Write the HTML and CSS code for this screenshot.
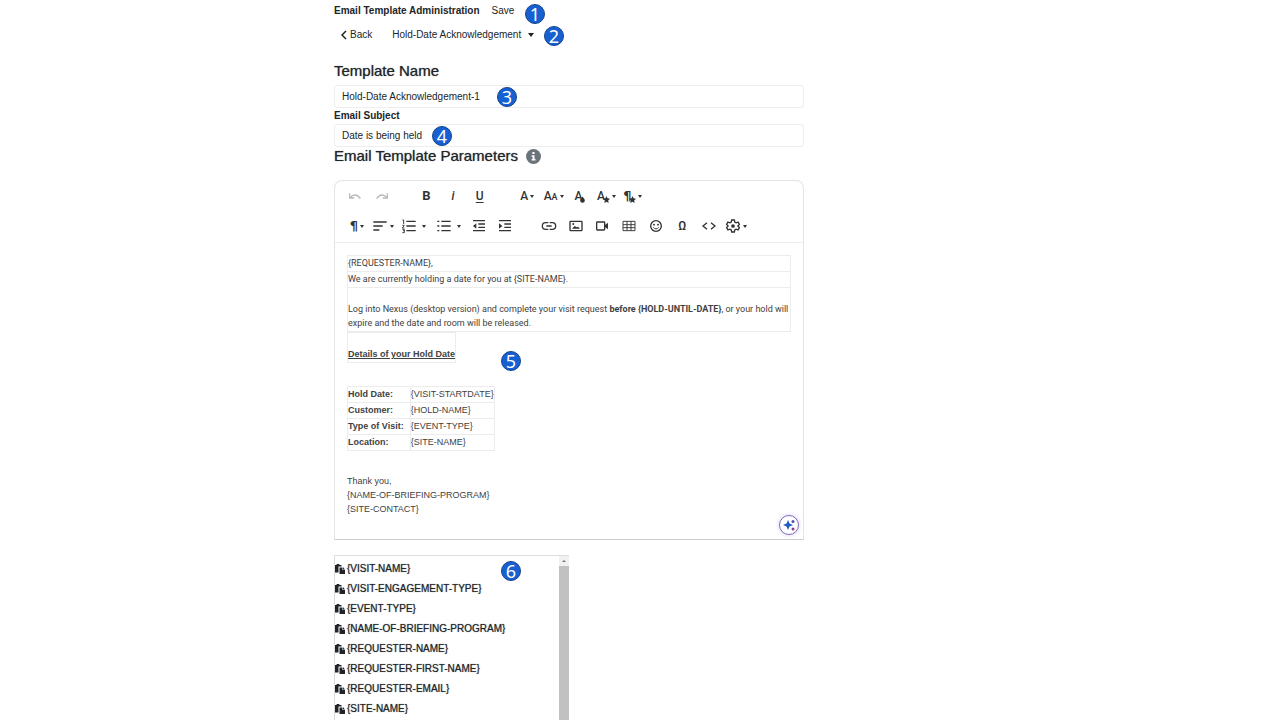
FILE: index.html
```
<!DOCTYPE html>
<html lang="en">
<head>
    <meta charset="utf-8">
    <title>Email Template Administration</title>
    <meta name="viewport" content="width=device-width, initial-scale=1">
    <link rel="stylesheet" href="styles.css">
</head>
<body>
    <main>
        <header class="titlebar">
            <h1>Email Template Administration</h1>
            <button class="plain">Save</button>
        </header>
        <nav class="subbar">
            <a href="#" class="back"><svg width="6" height="10" viewBox="0 0 6 10"><path d="M5 1L1 5l4 4" fill="none" stroke="#222" stroke-width="1.5"/></svg>Back</a>
            <span class="picker">
                <select aria-label="Template"><option>Hold-Date Acknowledgement</option></select>
                <svg width="6" height="4" viewBox="0 0 6 4"><path d="M0 0h6L3 4z" fill="#222"/></svg>
            </span>
        </nav>

        <h2><label for="name">Template Name</label></h2>
        <input class="field" id="name" type="text" value="Hold-Date Acknowledgement-1">
        <label class="small" for="subject">Email Subject</label>
        <input class="field" id="subject" type="text" value="Date is being held">
        <h2 class="params">Email Template Parameters
            <svg width="15" height="15" viewBox="0 0 16 16"><circle cx="8" cy="8" r="8" fill="#6b737b"/><path d="M6.8 3.2h2.3v2.2H6.8zM6 6.6h3.1v4h1v1.7H6v-1.7h1V8.3H6z" fill="#fff"/></svg>
        </h2>

        <section class="editor">
            <div class="toolbar">
                <div class="row">
                    <div class="group history">
                        <button aria-label="Undo"><svg class="off" viewBox="0 0 24 24"><path d="M4 8v7h7M5 14c4-5 11-5 15 2" class="line"/></svg></button>
                        <button aria-label="Redo"><svg class="off" viewBox="0 0 24 24"><path d="M20 8v7h-7M19 14c-4-5-11-5-15 2" class="line"/></svg></button>
                    </div>
                    <div class="group format">
                        <button class="bold">B</button>
                        <button class="italic">i</button>
                        <button class="under">U</button>
                    </div>
                    <div class="group text">
                        <button class="drop">A</button>
                        <button class="drop"><span>A<small>A</small></span></button>
                        <button aria-label="Text color" class="mark">A<svg viewBox="0 0 24 24"><path d="M12 2c4 6 8 9 8 13a8 8 0 0 1-16 0c0-4 4-7 8-13z"/></svg></button>
                        <button aria-label="Inline style" class="drop mark">A<svg viewBox="0 0 24 24"><path d="M12 0l3.5 8 8.5 1-6.3 6L19.5 24 12 19.5 4.5 24l1.8-9L0 9l8.5-1z"/></svg></button>
                        <button aria-label="Paragraph style" class="drop mark pilcrow">¶<svg viewBox="0 0 24 24"><path d="M12 0l3.5 8 8.5 1-6.3 6L19.5 24 12 19.5 4.5 24l1.8-9L0 9l8.5-1z"/></svg></button>
                    </div>
                </div>
                <div class="row second">
                    <div class="group">
                        <button class="drop pilcrow">¶</button>
                        <button aria-label="Align" class="drop"><svg viewBox="0 0 24 24"><path d="M2 6h20M2 12h14M2 18h9" class="line"/></svg></button>
                        <button aria-label="Ordered list" class="drop split"><svg viewBox="0 0 24 24"><path d="M8 5h14M8 12h14M8 19h14" class="line"/><path d="M2 3h2v6M2 11h3l-3 4h3M2 17h3v5H2M3 19h2" class="thin"/></svg></button>
                        <button aria-label="Unordered list" class="drop split"><svg viewBox="0 0 24 24"><path d="M8 5h14M8 12h14M8 19h14M2 5h3M2 12h3M2 19h3" class="line"/></svg></button>
                        <button aria-label="Decrease indent"><svg viewBox="0 0 24 24"><path d="M3 4h18M11 9h10M11 14h10M3 19h18" class="line"/><path d="M8 8v8l-5-4z"/></svg></button>
                        <button aria-label="Increase indent"><svg viewBox="0 0 24 24"><path d="M3 4h18M11 9h10M11 14h10M3 19h18" class="line"/><path d="M3 8v8l5-4z"/></svg></button>
                    </div>
                    <div class="group insert">
                        <button aria-label="Link"><svg viewBox="0 0 24 24"><path d="M11 7H7a5 5 0 0 0 0 10h4M13 7h4a5 5 0 0 1 0 10h-4M8 12h8" class="line"/></svg></button>
                        <button aria-label="Image"><svg viewBox="0 0 24 24"><rect x="3" y="5" width="18" height="14" rx="1" class="line"/><path d="M6 16l4-4 3 2 2-1 3 3z"/><circle cx="8" cy="9" r="1.5"/></svg></button>
                        <button aria-label="Video"><svg viewBox="0 0 24 24"><rect x="4" y="6" width="12" height="12" rx="1" class="line"/><path d="M16 11l5-4v10l-5-4z"/></svg></button>
                        <button aria-label="Table"><svg viewBox="0 0 24 24"><path d="M3 5h18v14H3zM3 10h18M3 14.5h18M9 5v14M15 5v14" class="thin"/></svg></button>
                        <button aria-label="Emoticons"><svg viewBox="0 0 24 24"><circle cx="12" cy="12" r="8" class="line"/><circle cx="9" cy="10" r="1.4"/><circle cx="15" cy="10" r="1.4"/><path d="M8 14c2 3 6 3 8 0" class="thin"/></svg></button>
                        <button>Ω</button>
                        <button aria-label="Code view"><svg viewBox="0 0 24 24"><path d="M9 7l-6 5 6 5M15 7l6 5-6 5" class="line"/></svg></button>
                    </div>
                    <button aria-label="More" class="drop more"><svg viewBox="0 0 24 24"><path d="M10 3h4l.6 3 2 1.2 3-1 2 3.5-2.3 2.3 2.3 2.3-2 3.5-3-1-2 1.2L14 21h-4l-.6-3-2-1.2-3 1-2-3.5L4.700 12 2.400 9.700l2-3.500 3 1 2-1.200z" class="line"/><circle cx="12" cy="12" r="2.800"/></svg></button>
                </div>
            </div>
            <div class="content">
                <table class="wide">
                    <tr><td>{REQUESTER-NAME},</td></tr>
                    <tr><td>We are currently holding a date for you at {SITE-NAME}.</td></tr>
                    <tr><td><br>Log into Nexus (desktop version) and complete your visit request <b>before {HOLD-UNTIL-DATE}</b>, or your hold will expire and the date and room will be released.</td></tr>
                </table>
                <table class="details">
                    <tr><td><br><b><u>Details of your Hold Date</u></b></td></tr>
                </table>
                <table class="hold">
                    <tr><th>Hold Date:</th><td>{VISIT-STARTDATE}</td></tr>
                    <tr><th>Customer:</th><td>{HOLD-NAME}</td></tr>
                    <tr><th>Type of Visit:</th><td>{EVENT-TYPE}</td></tr>
                    <tr><th>Location:</th><td>{SITE-NAME}</td></tr>
                </table>
                <p>Thank you,<br>{NAME-OF-BRIEFING-PROGRAM}<br>{SITE-CONTACT}</p>
            </div>
            <button class="assist" aria-label="Assistant"><svg width="12" height="12" viewBox="0 0 12 12"><path d="M5 1l1.5 3.5L10 6 6.5 7.5 5 11 3.5 7.5 0 6l3.5-1.5z" fill="#2458c4"/><circle cx="10" cy="2.5" r="1.5" fill="#4a50b4"/><circle cx="10" cy="10" r="1.5" fill="#8c3a8e"/></svg></button>
        </section>

        <section class="tokens">
            <ul>
                <li><button><svg><use href="#paste"/></svg>{VISIT-NAME}</button></li>
                <li><button><svg><use href="#paste"/></svg>{VISIT-ENGAGEMENT-TYPE}</button></li>
                <li><button><svg><use href="#paste"/></svg>{EVENT-TYPE}</button></li>
                <li><button><svg><use href="#paste"/></svg>{NAME-OF-BRIEFING-PROGRAM}</button></li>
                <li><button><svg><use href="#paste"/></svg>{REQUESTER-NAME}</button></li>
                <li><button><svg><use href="#paste"/></svg>{REQUESTER-FIRST-NAME}</button></li>
                <li><button><svg><use href="#paste"/></svg>{REQUESTER-EMAIL}</button></li>
                <li><button><svg><use href="#paste"/></svg>{SITE-NAME}</button></li>
            </ul>
            <div class="scrollbar"><svg width="10" height="10" viewBox="0 0 10 10"><path d="M3 6l2-2 2 2z" fill="#777"/></svg></div>
        </section>

        <span class="badge b1">1</span>
        <span class="badge b2">2</span>
        <span class="badge b3">3</span>
        <span class="badge b4">4</span>
        <span class="badge b5">5</span>
        <span class="badge b6">6</span>
    </main>

    <svg class="defs">
        <symbol id="paste" viewBox="0 0 20 20"><path d="M0 2h3a3 3 0 0 1 6 0h4v3H7v12H0zM9 7h6v5h5v8H9zM16 6l4 5h-4z"/></symbol>
    </svg>
</body>
</html>
```
FILE: styles.css
```
* { box-sizing: border-box; }
body { margin: 0; height: 100vh; overflow: hidden; display: grid; grid-template-columns: 334fr 470fr 476fr; background: #fff; color: #212529; font: 10px/16px "Liberation Sans", Arial, sans-serif; }
button, input, select { font: inherit; color: inherit; background: none; border: 0; margin: 0; padding: 0; }
h1, h2, p, ul { margin: 0; padding: 0; }

main { grid-column: 2; position: relative; height: 100vh; display: flex; flex-direction: column; }
.titlebar { display: flex; align-items: center; gap: 12px; height: 22px; }
h1 { font-size: 10px; }
.subbar { display: flex; align-items: center; gap: 20px; height: 26px; padding-left: 7px; }
.back { display: flex; align-items: center; gap: 3px; color: inherit; text-decoration: none; }
.picker { display: flex; align-items: center; gap: 6px; }
select { appearance: none; }

/* medium weight */
h2, .tokens { text-shadow: 0 0 1px #212529aa; }
h2 { font-size: 15px; line-height: 18px; font-weight: 400; margin: 14px 0 5px; }
.params { display: flex; align-items: center; gap: 8px; margin: 0 0 15px; }
.field { width: 100%; height: 23px; flex: none; border: 1px solid #eee; border-radius: 3px; padding: 0 7px; }
.small { font-weight: 700; }

.editor { position: relative; border: 1px solid #e4e4e4; border-bottom-color: #ccc; border-radius: 8px 8px 0 0; }
.toolbar { padding-bottom: 1px; border-bottom: 1px solid #ececec; color: #333; font: 500 12px/16px Roboto, sans-serif; }
.row { display: flex; gap: 18px; height: 30px; padding-left: 7px; }
.second { padding-left: 9px; }
.group { display: flex; }
.group button { flex: 1; display: flex; align-items: center; justify-content: center; }
.history { width: 53px; }
.format { width: 80px; }
.text { width: 132px; margin-left: 3px; }
.second .group button { flex: 0 0 26px; }
.second .group .split { flex-basis: 35px; }
.second .insert { width: 186px; }
.second .insert button { flex: 1; }
.more { width: 28px; margin-left: -18px; }
.toolbar svg { width: 16px; height: 16px; fill: #333; }
.toolbar .line { fill: none; stroke: #333; stroke-width: 2; }
.toolbar .thin { fill: none; stroke: #333; stroke-width: 1.4; }
.toolbar .off .line { stroke: #bbb; }
.toolbar .drop { display: flex; align-items: center; justify-content: center; gap: 2px; }
.drop::after { content: ""; border: 2px solid transparent; border-top: 3px solid #333; border-bottom: 0; }
.toolbar .split { gap: 5px; }
.toolbar .mark svg { width: 7px; height: 7px; margin: 7px 0 0 -4px; }
.toolbar .pilcrow { font: 700 13px/16px "DejaVu Sans", sans-serif; }
.toolbar .bold { font-size: 13px; font-weight: 700; }
.italic { font-style: italic; }
.under { text-decoration: underline; text-underline-offset: 2px; }
.text small { font-size: 9px; }

.content { padding: 12px 12px 23px; color: #414141; font-size: 9px; line-height: 14px; }
.content table { border-collapse: collapse; }
.content td, .content th { border: 1px solid #ececec; padding: 0 0 1px; text-align: left; }
.content .wide { width: 100%; font-family: Roboto, Arial, sans-serif; }
.content .hold { margin: 23px 0; }
.content .hold th { padding-right: 6px; }
.assist { position: absolute; right: 4px; bottom: 4px; width: 20px; height: 20px; display: grid; place-items: center; border: 1px solid #7d6fb8; border-radius: 50%; background: #fff; box-shadow: 0 0 4px #d9c8f5; }

.tokens { flex: 1; min-height: 0; width: 50%; margin-top: 15px; display: flex; border: 1px solid #ddd; border-width: 1px 0 0 1px; overflow: hidden; }
.tokens ul { flex: 1; list-style: none; padding-top: 3px; }
.tokens li { height: 20px; }
.tokens button { display: flex; align-items: center; gap: 2px; height: 20px; text-shadow: inherit; }
.tokens button svg { width: 10px; height: 10px; fill: #212529; }
.scrollbar { width: 10px; background: #c1c1c1; }
.scrollbar svg { display: block; background: #f1f1f1; }

.badge { position: absolute; width: 20px; height: 20px; border: 1px solid #17438f; border-radius: 50%; background: #1660d2; color: #fff; font: 18px/18px "Noto Sans", sans-serif; text-align: center; }
.b1 { left: 191px; top: 4px; }
.b2 { left: 210px; top: 26px; }
.b3 { left: 163px; top: 87px; }
.b4 { left: 98px; top: 126px; }
.b5 { left: 167px; top: 351px; }
.b6 { left: 167px; top: 561px; }
.defs { display: none; }
```
